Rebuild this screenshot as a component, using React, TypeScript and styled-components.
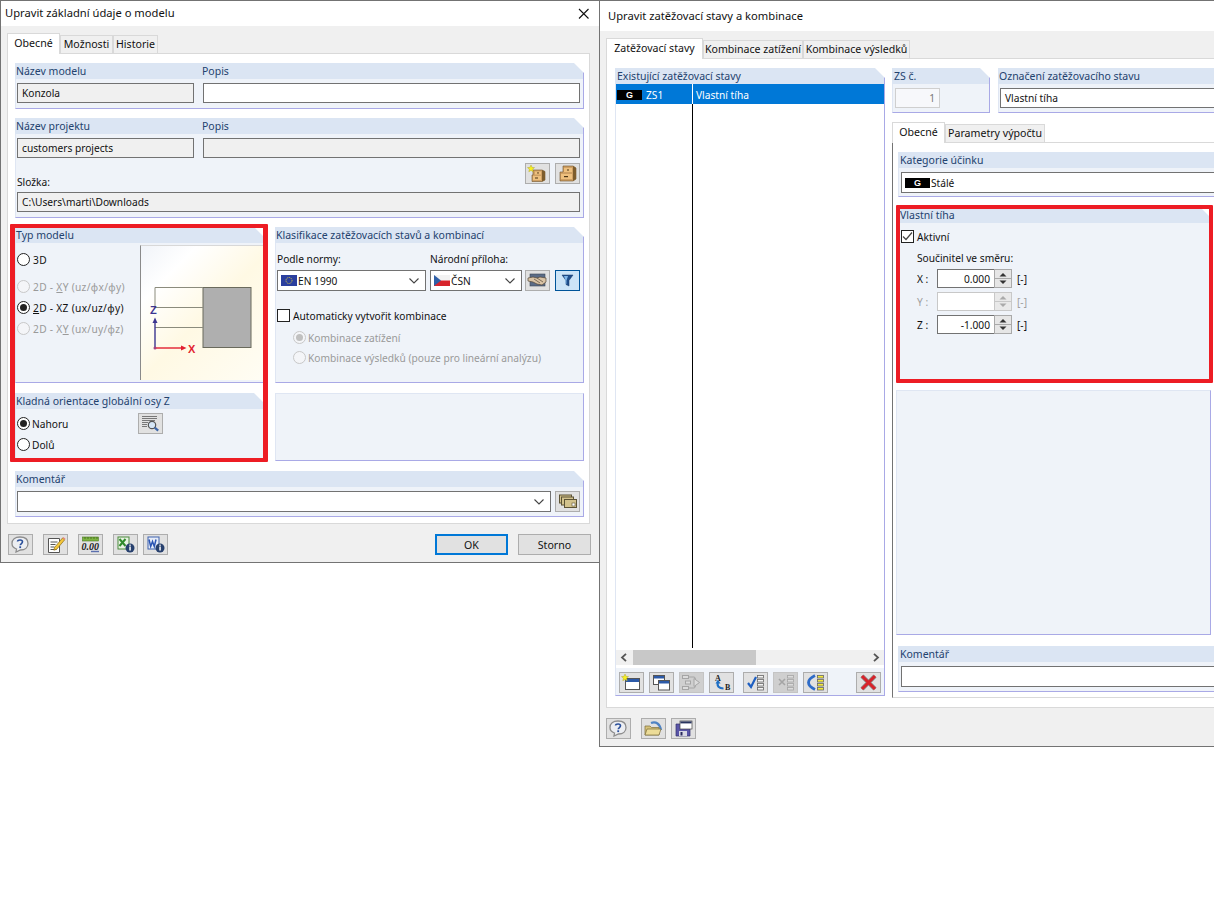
import React from 'react';
import styled, { createGlobalStyle } from 'styled-components';

const GlobalStyle = createGlobalStyle`
  html, body {
    margin: 0;
    background: #fff;
  }
  * {
    box-sizing: border-box;
  }
`;

const Page = styled.div`
  position: relative;
  width: 1214px;
  height: 900px;
  overflow: hidden;
  background: #fff;
  color: #111;
  font-family: 'Noto Sans', 'Liberation Sans', sans-serif;
  font-size: 10.2px;
`;

const Window = styled.div<{ $left: number; $width: number; $height: number }>`
  position: absolute;
  top: 0;
  left: ${(p) => p.$left}px;
  width: ${(p) => p.$width}px;
  height: ${(p) => p.$height}px;
  display: flex;
  flex-direction: column;
  background: #f0f0f0;
  border: 1px solid #737373;
`;

const TitleBar = styled.div<{ $h: number; $pad: number }>`
  flex: none;
  display: flex;
  align-items: center;
  justify-content: space-between;
  height: ${(p) => p.$h}px;
  padding: 0 9px 2px ${(p) => p.$pad}px;
  background: #fff;
  font-size: 11.2px;
  svg {
    margin-top: 2px;
  }
`;

const TabRow = styled.div`
  display: flex;
  align-items: flex-end;
`;

const Tab = styled.div<{ $active?: boolean; $w: number }>`
  width: ${(p) => p.$w}px;
  height: ${(p) => (p.$active ? 21 : 19)}px;
  margin-bottom: -1px;
  padding-bottom: ${(p) => (p.$active ? 2 : 1)}px;
  position: relative;
  z-index: ${(p) => (p.$active ? 1 : 0)};
  display: flex;
  align-items: center;
  justify-content: center;
  background: ${(p) => (p.$active ? '#fff' : '#f0f0f0')};
  border: 1px solid #d9d9d9;
  border-bottom: ${(p) => (p.$active ? 'none' : '1px solid #d9d9d9')};
  font-size: 10.6px;
  white-space: nowrap;
`;

const LeftBody = styled.div`
  flex: 1;
  padding: 7px 9px 0 6px;
  display: flex;
  flex-direction: column;
`;

const LeftPanel = styled.div`
  height: 471px;
  display: flex;
  flex-direction: column;
  gap: 9px;
  padding: 9px 5px 0 7px;
  background: #fff;
  border: 1px solid #d9d9d9;
`;

const Section = styled.section<{ $h: number; $w?: number }>`
  flex: none;
  display: flex;
  flex-direction: column;
  height: ${(p) => p.$h}px;
  width: ${(p) => (p.$w ? `${p.$w}px` : 'auto')};
`;

const SectionHead = styled.div<{ $split?: boolean; $pad?: number }>`
  flex: none;
  height: 16px;
  padding: 0 0 1px ${(p) => p.$pad ?? 1}px;
  display: grid;
  grid-template-columns: ${(p) => (p.$split ? '186px 1fr' : '1fr')};
  align-items: center;
  color: #23426e;
  font-size: 10.5px;
  white-space: nowrap;
  background: linear-gradient(to left, #a9a9e6 1px, #dbe5f3 1px);
  clip-path: polygon(0 0, calc(100% - 10px) 0, 100% 10px, 100% 100%, 0 100%);
`;

const SectionBody = styled.div`
  flex: 1;
  min-height: 0;
  background: #eff3f9;
  border-left: 1px solid #dfe6f3;
  border-right: 1px solid #a9a9e6;
  border-bottom: 1px solid #a9a9e6;
`;

const FieldBody = styled(SectionBody)`
  padding: 4px 3px 0 1px;
`;

const FieldGrid = styled.div`
  display: grid;
  grid-template-columns: 177px 1fr;
  gap: 9px;
`;

const Field = styled.div<{ $tone?: 'white' | 'grey' | 'off'; $h?: number; $w?: number }>`
  flex: ${(p) => (p.$w ? 'none' : '1')};
  width: ${(p) => (p.$w ? `${p.$w}px` : 'auto')};
  height: ${(p) => p.$h ?? 20}px;
  display: flex;
  align-items: center;
  gap: 2px;
  padding: 0 4px;
  white-space: nowrap;
  border: 1px solid ${(p) => (p.$tone === 'off' ? '#cfcfcf' : '#727272')};
  color: ${(p) => (p.$tone === 'off' ? '#777' : '#111')};
  justify-content: ${(p) => (p.$tone === 'off' ? 'flex-end' : 'flex-start')};
  background: ${(p) => (p.$tone === 'grey' ? '#f0f0f0' : p.$tone === 'off' ? '#f7f8fb' : '#fff')};
`;

const NumberField = styled(Field)`
  margin-left: 1px;
`;

const Chevron = styled.svg`
  margin-left: auto;
  margin-right: 2px;
  flex: none;
`;

const Flag = styled.svg`
  flex: none;
  margin: 0 -1px;
`;

const FolderRow = styled.div`
  height: 34px;
  display: flex;
  justify-content: space-between;
  align-items: flex-start;
`;

const FolderLabel = styled.span`
  align-self: flex-end;
  margin-bottom: 3px;
`;

const ButtonRow = styled.div<{ $gap?: number; $top?: number }>`
  display: flex;
  gap: ${(p) => p.$gap ?? 5}px;
  margin-top: ${(p) => p.$top ?? 0}px;
`;

const IconButton = styled.div<{ $off?: boolean; $on?: boolean }>`
  flex: none;
  width: 25px;
  height: 21px;
  display: flex;
  align-items: center;
  justify-content: center;
  background: ${(p) => (p.$on ? '#cce4f7' : p.$off ? '#cfcfcf' : '#e1e1e1')};
  border: 1px solid ${(p) => (p.$on ? '#005499' : p.$off ? '#c4c4c4' : '#adadad')};
`;

const MiddleGrid = styled.div`
  display: grid;
  grid-template-columns: 249px 1fr;
  column-gap: 11px;
  row-gap: 10px;
`;

const TypeBody = styled(SectionBody)`
  display: flex;
  padding-left: 1px;
`;

const RadioColumn = styled.div`
  flex: none;
  width: 123px;
  padding-top: 6px;
  display: flex;
  flex-direction: column;
`;

const ModelLabel = styled.span`
  margin-left: 1px;
  letter-spacing: 0.3px;
`;

const OptionRow = styled.label<{ $off?: boolean; $gapTop?: number; $indent?: number }>`
  height: 21px;
  margin-top: ${(p) => p.$gapTop ?? 0}px;
  margin-left: ${(p) => p.$indent ?? 0}px;
  display: flex;
  align-items: center;
  gap: 2px;
  white-space: nowrap;
  color: ${(p) => (p.$off ? '#9a9a9a' : '#111')};
`;

const Radio = styled.span<{ $checked?: boolean; $off?: boolean }>`
  flex: none;
  width: 13px;
  height: 13px;
  border-radius: 50%;
  display: flex;
  align-items: center;
  justify-content: center;
  background: ${(p) => (p.$off ? '#f4f5f8' : '#fff')};
  border: 1px solid ${(p) => (p.$off ? '#c8c8c8' : '#222')};
  &::after {
    content: '';
    display: ${(p) => (p.$checked ? 'block' : 'none')};
    width: 7px;
    height: 7px;
    border-radius: 50%;
    background: ${(p) => (p.$off ? '#c0c0c0' : '#222')};
  }
`;

const Check = styled.span`
  flex: none;
  width: 13px;
  height: 13px;
  margin-right: 1px;
  display: flex;
  align-items: center;
  justify-content: center;
  background: #fff;
  border: 1px solid #222;
`;

const Diagram = styled.div`
  flex: none;
  width: 123px;
  height: 135px;
  margin-top: 2px;
  background: linear-gradient(135deg, #f1f4f9 0%, #fff 22%, #fff9e4 52%, #fffdf4 100%);
  border-left: 1px solid #8a8a8a;
  border-top: 1px solid #d8d8d8;
`;

const OrientBody = styled(SectionBody)`
  display: flex;
  padding: 4px 0 0 1px;
`;

const OrientColumn = styled.div`
  width: 121px;
`;

const PlainBody = styled(SectionBody)`
  border-top: 1px solid #dfe6f3;
`;

const ClassBody = styled(SectionBody)`
  padding: 9px 3px 0 1px;
`;

const LabelGrid = styled.div`
  display: grid;
  grid-template-columns: 153px 1fr;
  height: 14px;
  line-height: 14px;
  margin-bottom: 4px;
`;

const NormRow = styled.div`
  display: flex;
  align-items: center;
  gap: 4px;
`;

const ExtraButtons = styled.div`
  display: flex;
  gap: 5px;
  margin-left: -1px;
`;

const CommentRow = styled.div`
  display: flex;
  gap: 4px;
`;

const DialogFooter = styled.div`
  flex: 1;
  display: flex;
  align-items: flex-start;
  margin-right: -1px;
  padding: 10px 0 0 1px;
`;

const TextButton = styled.div<{ $primary?: boolean }>`
  width: 73px;
  height: 21px;
  display: flex;
  align-items: center;
  justify-content: center;
  background: #e1e1e1;
  font-size: 10.6px;
  border: ${(p) => (p.$primary ? '2px solid #0078d7' : '1px solid #adadad')};
`;

const FooterRight = styled.div`
  margin-left: auto;
  display: flex;
  gap: 10px;
`;

const FooterIcons = styled.div`
  display: flex;
  gap: 10px;
`;

const RightBody = styled.div`
  flex: 1;
  padding: 7px 0 0 6px;
  display: flex;
  flex-direction: column;
`;

const RightPanel = styled.div`
  height: 650px;
  padding: 9px 0 0 8px;
  display: flex;
  gap: 7px;
  background: #fff;
  border: 1px solid #d9d9d9;
`;

const CaseListWrap = styled.div`
  height: 100%;
  display: flex;
  flex-direction: column;
`;

const CaseList = styled.div`
  flex: 1;
  min-height: 0;
  display: flex;
  background: #fff;
`;

const CaseColumn = styled.div<{ $w?: number; $rule?: boolean }>`
  flex: ${(p) => (p.$w ? 'none' : '1')};
  width: ${(p) => (p.$w ? `${p.$w}px` : 'auto')};
  margin-bottom: 2px;
  border-right: ${(p) => (p.$rule ? '1px solid #000' : 'none')};
`;

const CaseCell = styled.div<{ $rule?: boolean }>`
  height: 20px;
  margin-right: ${(p) => (p.$rule ? -1 : 0)}px;
  display: flex;
  align-items: center;
  gap: 4px;
  padding: 1px 0 0 ${(p) => (p.$rule ? 1 : 3)}px;
  color: #fff;
  background: #0078d7;
  border-right: ${(p) => (p.$rule ? '1px solid #fff' : 'none')};
`;

const Chip = styled.span`
  flex: none;
  width: 25px;
  height: 10px;
  display: flex;
  align-items: center;
  justify-content: center;
  color: #fff;
  background: #000;
  font-family: 'Liberation Sans', sans-serif;
  font-size: 9px;
  font-weight: 700;
`;

const FieldChip = styled(Chip)`
  margin-left: -1px;
  margin-right: -1px;
`;

const HScroll = styled.div`
  flex: none;
  height: 15px;
  display: flex;
  align-items: center;
  justify-content: space-between;
  padding: 0 4px;
  position: relative;
  background: #f0f0f0;
`;

const HThumb = styled.div`
  position: absolute;
  left: 17px;
  top: 0;
  width: 123px;
  height: 15px;
  background: #c8c8c8;
`;

const ListToolbar = styled.div`
  flex: none;
  height: 30px;
  display: flex;
  gap: 9px;
  padding: 7px 3px 0 3px;
  background: linear-gradient(to bottom, #fff 3px, #eff3f9 3px);
`;

const PushRight = styled.div`
  margin-left: auto;
`;

const RightColumn = styled.div`
  flex: 1;
  display: flex;
  flex-direction: column;
`;

const TopRow = styled.div`
  display: flex;
  gap: 8px;
  margin-bottom: 9px;
`;

const NameBody = styled(FieldBody)`
  padding-left: 1px;
  display: flex;
`;

const CategoryBody = styled(FieldBody)`
  padding-left: 2px;
  display: flex;
`;

const SubPanel = styled.div`
  flex: none;
  width: 340px;
  height: 556px;
  padding: 9px 0 0 5px;
  display: flex;
  flex-direction: column;
  background: #fff;
  border-top: 1px solid #d9d9d9;
  border-bottom: 1px solid #d9d9d9;
  border-left: 1px solid #737373;
`;

const WeightHolder = styled.div`
  margin-top: 10px;
  margin-bottom: 10px;
`;

const WeightBody = styled(SectionBody)`
  padding: 3px 0 0 2px;
`;

const CoefRow = styled.div<{ $off?: boolean }>`
  height: 19px;
  margin: 0 0 4px 16px;
  display: flex;
  align-items: center;
  color: ${(p) => (p.$off ? '#a0a0a0' : '#111')};
`;

const CoefName = styled.span`
  width: 20px;
`;

const Coef = styled.div<{ $off?: boolean }>`
  width: 57px;
  height: 19px;
  padding-right: 4px;
  display: flex;
  align-items: center;
  justify-content: flex-end;
  background: #fff;
  color: #111;
  border: 1px solid ${(p) => (p.$off ? '#c8c8c8' : '#727272')};
  border-right: none;
`;

const Spin = styled.svg`
  flex: none;
`;

const Unit = styled.span`
  margin-left: 5px;
`;

const CoefTitle = styled.div`
  height: 14px;
  line-height: 14px;
  margin: 4px 0 4px 16px;
`;

const EmptyBlock = styled(SectionBody)`
  flex: none;
  width: 315px;
  height: 245px;
  margin: 0 0 11px -2px;
  border-top: 1px solid #dfe6f3;
`;

const RightFooter = styled.div`
  flex: 1;
  display: flex;
  gap: 5px;
  padding: 10px 0 0 0;
`;

const FooterHelp = styled.div`
  margin-right: 5px;
`;

const Highlight = styled.div<{ $left: number; $top: number; $w: number; $h: number; $side: number }>`
  position: absolute;
  left: ${(p) => p.$left}px;
  top: ${(p) => p.$top}px;
  width: ${(p) => p.$w}px;
  height: ${(p) => p.$h}px;
  border: 4px solid #ed1c24;
  border-left-width: ${(p) => p.$side}px;
  border-right-width: ${(p) => p.$side}px;
  border-radius: 1px;
  pointer-events: none;
`;

// all toolbar icons share the same 21x17 drawing box
const Ico: React.FC<{ children: React.ReactNode }> = ({ children }) => (
  <svg width="21" height="17" viewBox="0 0 21 17">
    {children}
  </svg>
);

const Star = () => <path d="M4 0l1 2.400 2.500.2-1.900 1.600.6 2.500L4 5.400 1.800 6.700l.6-2.500L.5 2.600 3 2.400z" fill="#f6f01e" stroke="#b5a92a" strokeWidth=".5" />;

const InfoDot = () => (
  <g>
    <circle cx="15" cy="12" r="4.500" fill="#27406e" />
    <rect x="14.300" y="10.500" width="1.500" height="4" fill="#fff" />
    <rect x="14.300" y="8.600" width="1.500" height="1.200" fill="#fff" />
  </g>
);

const HelpIcon = () => (
  <Ico>
    <path d="M10 1c5 0 8 2.500 8 6.500S15 14 10.500 14L6 16l.5-3C3.500 12 2 10 2 7.500 2 3.500 5 1 10 1z" fill="#eceef2" stroke="#8d8d8d" strokeWidth="1.300" />
    <path d="M7.500 5.500c.3-2 5-2.300 5 .3 0 1.700-2.200 1.700-2.300 3.500" fill="none" stroke="#2a4f9a" strokeWidth="1.600" />
    <rect x="9.300" y="10.300" width="1.800" height="1.800" fill="#2a4f9a" />
  </Ico>
);

const NoteIcon = () => (
  <Ico>
    <path d="M3.500 2.500h11v14h-11z" fill="#fff" stroke="#555" />
    <path d="M5.500 6h7M5.500 8.500h5M5.500 11h4M5.500 13.500h6" stroke="#555" />
    <path d="M9.500 11.500L17.500 2l2.200 1.800-8 9.500-2.800.9z" fill="#f4c63a" stroke="#8a6a14" strokeWidth=".7" />
    <path d="M17.500 2l2.200 1.800 .8-1-2.200-1.800z" fill="#e8837a" />
  </Ico>
);

const DecimalIcon = () => (
  <Ico>
    <rect x="2.500" y="1" width="16" height="4" fill="#7cb342" stroke="#4d7a24" strokeWidth=".6" />
    <path d="M5 1v2M8 1v2M11 1v2M14 1v2M17 1v2" stroke="#2f5212" strokeWidth=".6" />
    <text x="1.500" y="14" fontFamily="Liberation Serif, serif" fontStyle="italic" fontWeight="700" fontSize="10" fill="#222">0.00</text>
    <path d="M11 15.500h8" stroke="#5b6fae" strokeWidth="1.400" />
  </Ico>
);

const ExcelInfoIcon = () => (
  <Ico>
    <rect x="3" y="1" width="11" height="12" fill="#e8f3e2" stroke="#4b8a3c" />
    <path d="M4.500 3l6 7M10.500 3l-6 7" stroke="#2f8a2c" strokeWidth="2" />
    <InfoDot />
  </Ico>
);

const WordInfoIcon = () => (
  <Ico>
    <rect x="3" y="1" width="11" height="12" fill="#e6ecf8" stroke="#3f62ad" />
    <path d="M4 3.500l1.700 7 1.800-5 1.800 5 1.700-7" fill="none" stroke="#2b55b3" strokeWidth="1.500" />
    <InfoDot />
  </Ico>
);

const NewDrawerIcon = () => (
  <Ico>
    <path d="M6 5h9l3 1.500V15l-3 1.500H5V10h1z" fill="#cfa064" stroke="#6e5128" strokeWidth=".6" />
    <path d="M15 5l3 1.500V15l-3 1.500z" fill="#7d5c2c" />
    <rect x="8" y="6.500" width="6" height="3" fill="#eec07e" />
    <rect x="10" y="7.500" width="2" height=".9" fill="#4a3414" />
    <rect x="6" y="11" width="8" height="4" fill="#eec07e" />
    <rect x="8" y="12.500" width="3" height="1" fill="#4a3414" />
    <Star />
  </Ico>
);

const DrawerIcon = () => (
  <Ico>
    <path d="M6 1h10l3 2v11l-3 2H3V7h3z" fill="#cfa064" stroke="#6e5128" strokeWidth=".6" />
    <path d="M16 1l3 2v11l-3 2z" fill="#7d5c2c" />
    <rect x="7" y="3" width="8" height="4" fill="#eec07e" />
    <rect x="10" y="4.500" width="2" height="1" fill="#4a3414" />
    <rect x="4" y="9" width="11" height="5" fill="#eec07e" />
    <rect x="7" y="11" width="4" height="1.200" fill="#4a3414" />
  </Ico>
);

const HandsIcon = () => (
  <Ico>
    <rect x="3" y="2" width="15" height="12" fill="#5a6b86" stroke="#3d4656" strokeWidth=".6" />
    <path d="M1 6l5-1 4 1 3-1 6 1v4l-4 3-5-1-4-2-5-1z" fill="#d9c3a5" stroke="#54483a" strokeWidth=".7" />
    <path d="M7 7l3 2 3 2M10 6l3 2 3 2" stroke="#54483a" strokeWidth=".7" fill="none" />
  </Ico>
);

const FunnelIcon = () => (
  <Ico>
    <path d="M5 3h11l-4 5.500V14l-3-1.500V8.500z" fill="#1f4e8c" stroke="#173a68" strokeWidth=".5" />
    <path d="M7 4h4l-1.500 4.500V12l-1-.5V8.500z" fill="#7fb6e8" />
  </Ico>
);

const LookIcon = () => (
  <Ico>
    <path d="M2 1.500h15M2 3.500h15M2 5.500h13M2 7.500h6M2 9.500h5M2 11.500h5" stroke="#777" />
    <circle cx="12" cy="10" r="3.700" fill="#d5e6f7" stroke="#555" strokeWidth="1.200" />
    <path d="M14.700 12.700l3.500 3" stroke="#3d66a8" strokeWidth="2.200" />
  </Ico>
);

const StackIcon = () => (
  <Ico>
    <rect x="2.500" y="2" width="12" height="8" fill="#d2c28c" stroke="#5c5335" />
    <rect x="4.500" y="4" width="12" height="8" fill="#d2c28c" stroke="#5c5335" />
    <rect x="7.500" y="6.500" width="12" height="8" fill="#d2c28c" stroke="#5c5335" />
    <rect x="15" y="10" width="3" height="3" fill="#fff" stroke="#5c5335" strokeWidth=".6" />
  </Ico>
);

const NewWindowIcon = () => (
  <Ico>
    <rect x="4.500" y="4.500" width="14" height="11" fill="#fff" stroke="#555" />
    <rect x="5" y="5" width="13" height="3" fill="#2c5aa8" />
    <Star />
  </Ico>
);

const CopyWindowsIcon = () => (
  <Ico>
    <rect x="2.500" y="1.500" width="11" height="9" fill="#fff" stroke="#555" />
    <rect x="3" y="2" width="10" height="2.500" fill="#2c5aa8" />
    <rect x="7.500" y="6.500" width="11" height="9.500" fill="#fff" stroke="#555" />
    <rect x="8" y="7" width="10" height="2.500" fill="#2c5aa8" />
  </Ico>
);

const FlowIcon = () => (
  <Ico>
    <g fill="#dcdcdc" stroke="#a5a5a5">
      <rect x="1.500" y="1.500" width="6" height="3" />
      <rect x="1.500" y="12.500" width="6" height="3" />
      <rect x="4.500" y="7" width="5" height="3" />
      <path d="M13 4.500l5.500 4-5.500 4z" />
    </g>
    <path d="M7.500 3h6l1 2M7.500 14h6l1-2" stroke="#a5a5a5" fill="none" />
  </Ico>
);

const SwapIcon = () => (
  <Ico>
    <text x="4" y="7" fontFamily="Liberation Serif, serif" fontWeight="700" fontSize="8" fill="#222">A</text>
    <text x="14" y="16" fontFamily="Liberation Serif, serif" fontWeight="700" fontSize="8" fill="#222">B</text>
    <path d="M7 8c-1.500 4 1 6.500 5.500 6.500" fill="none" stroke="#1f6fc4" strokeWidth="2" />
    <path d="M4.500 9.500L7 5.500 9.500 9.500z" fill="#1f6fc4" />
  </Ico>
);

const ListLines = ({ color, fill }: { color: string; fill: string }) => (
  <g fill={fill} stroke={color} strokeWidth=".8">
    <rect x="12.500" y="1.500" width="6" height="2.500" />
    <rect x="12.500" y="5.500" width="6" height="2.500" />
    <rect x="12.500" y="9.500" width="6" height="2.500" />
    <rect x="12.500" y="13.500" width="6" height="2.500" />
  </g>
);

const CheckListIcon = () => (
  <Ico>
    <ListLines color="#666" fill="#f4f4f4" />
    <path d="M3 9l3 4 5-10" fill="none" stroke="#1e5fc2" strokeWidth="2.200" />
  </Ico>
);

const CrossListIcon = () => (
  <Ico>
    <ListLines color="#a5a5a5" fill="#dcdcdc" />
    <path d="M4 5l6 6M10 5l-6 6" stroke="#a5a5a5" strokeWidth="1.600" />
  </Ico>
);

const YellowListIcon = () => (
  <Ico>
    <ListLines color="#666" fill="#f5ea3a" />
    <path d="M10 1.500C5 4 3.500 7 3.500 8.500S5 13 10 15.500" fill="none" stroke="#2f6cc8" strokeWidth="2.800" />
  </Ico>
);

const RedCrossIcon = () => (
  <Ico>
    <path d="M4 2l13 13M17 2L4 15" stroke="#8f8f8f" strokeWidth="4.500" />
    <path d="M4 2l13 13M17 2L4 15" stroke="#d8232a" strokeWidth="3" />
  </Ico>
);

const FolderIcon = () => (
  <Ico>
    <path d="M8 3c5-2 9 1 10 7" fill="none" stroke="#4f83c4" strokeWidth="2.200" />
    <path d="M2 6h5l1.500 1.500H16V15H2z" fill="#d6c27a" stroke="#7c6d3a" strokeWidth=".7" />
    <path d="M2 15l2-6h14l-2 6z" fill="#ecdc98" stroke="#7c6d3a" strokeWidth=".7" />
  </Ico>
);

const SaveIcon = () => (
  <Ico>
    <path d="M3 4h12.500L17 5.500V16H3z" fill="#5a55a8" stroke="#35326e" strokeWidth=".7" />
    <rect x="7" y="1" width="12" height="8" fill="#fff" stroke="#444" strokeWidth=".7" />
    <rect x="7.400" y="1.400" width="11.200" height="2" fill="#28345e" />
    <rect x="6" y="11" width="8" height="5" fill="#d8d8e4" />
    <rect x="7.500" y="12" width="2" height="3.500" fill="#28285e" />
  </Ico>
);

const CloseIcon = () => (
  <svg width="13" height="13" viewBox="0 0 13 13">
    <path d="M2 2l9.500 9.500M11.500 2L2 11.500" stroke="#111" strokeWidth="1.100" />
  </svg>
);

const ChevronDown = () => (
  <Chevron width="10" height="6" viewBox="0 0 10 6">
    <path d="M.5.500L5 5 9.500.500" fill="none" stroke="#444" strokeWidth="1.100" />
  </Chevron>
);

const EuFlag = () => (
  <Flag width="16" height="11" viewBox="0 0 16 11">
    <rect width="16" height="11" fill="#2b3f9e" />
    <circle cx="8" cy="5.500" r="3" fill="none" stroke="#e8d53a" strokeWidth="1" strokeDasharray="1 1" />
  </Flag>
);

const CzFlag = () => (
  <Flag width="16" height="11" viewBox="0 0 16 11">
    <rect width="16" height="5.500" fill="#f2f2f2" />
    <rect y="5.500" width="16" height="5.500" fill="#d7242c" />
    <path d="M0 0l7 5.500L0 11z" fill="#2f5fa6" />
  </Flag>
);

const Tick = () => (
  <svg width="11" height="11" viewBox="0 0 11 11">
    <path d="M1 5.500l3 3L10 1.500" fill="none" stroke="#444" strokeWidth="1.200" />
  </svg>
);

const Spinner = ({ off }: { off?: boolean }) => (
  <Spin width="18" height="19" viewBox="0 0 18 19">
    <rect x=".5" y=".5" width="17" height="18" fill={off ? '#e9e9e9' : '#e6e6e6'} stroke={off ? '#c8c8c8' : '#a9a9a9'} />
    <path d="M1 9.500h16" stroke={off ? '#c8c8c8' : '#a9a9a9'} />
    <path d="M5.500 7.500L9 4l3.500 3.500z" fill={off ? '#aaa' : '#333'} />
    <path d="M5.500 11.500L9 15l3.500-3.500z" fill={off ? '#aaa' : '#333'} />
  </Spin>
);

const ScrollArrow = ({ flip }: { flip?: boolean }) => (
  <svg width="8" height="9" viewBox="0 0 8 9">
    <path d={flip ? 'M2 .8l4 3.700-4 3.700' : 'M6 .8L2 4.500l4 3.700'} fill="none" stroke="#555" strokeWidth="1.800" />
  </svg>
);

const AxisDiagram = () => (
  <svg width="122" height="134" viewBox="0 0 122 134">
    <rect x="62" y="41.500" width="48" height="60" fill="#afafaf" stroke="#6a6a5c" />
    <path d="M14 41.500h48M14 61.500h48M14 81.500h48M14 41.500v20" stroke="#8b8b7c" fill="none" />
    <path d="M14 102V76" stroke="#3c3590" strokeWidth="1.400" />
    <path d="M11.500 77L14 71.500l2.500 5.500z" fill="#3c3590" />
    <text x="9" y="68" fontFamily="Liberation Sans, sans-serif" fontWeight="700" fontSize="11" fill="#3c3590">Z</text>
    <path d="M14 102h28" stroke="#e21f30" strokeWidth="1.400" />
    <path d="M40 99.500l5.500 2.500-5.500 2.500z" fill="#e21f30" />
    <text x="47" y="107" fontFamily="Liberation Sans, sans-serif" fontWeight="700" fontSize="11" fill="#e21f30">X</text>
    <circle cx="14" cy="102" r="1.500" fill="#a2437e" />
  </svg>
);

const App: React.FC = () => {
  return (
    <Page>
      <GlobalStyle />

      <Window $left={0} $width={600} $height={563}>
        <TitleBar $h={25} $pad={4}>
          Upravit základní údaje o modelu
          <CloseIcon />
        </TitleBar>
        <LeftBody>
          <TabRow>
            <Tab $active $w={53}>Obecné</Tab>
            <Tab $w={53}>Možnosti</Tab>
            <Tab $w={45}>Historie</Tab>
          </TabRow>
          <LeftPanel>
            <Section $h={46}>
              <SectionHead $split>
                <span>Název modelu</span>
                <span>Popis</span>
              </SectionHead>
              <FieldBody>
                <FieldGrid>
                  <Field $tone="grey">Konzola</Field>
                  <Field />
                </FieldGrid>
              </FieldBody>
            </Section>

            <Section $h={100}>
              <SectionHead $split>
                <span>Název projektu</span>
                <span>Popis</span>
              </SectionHead>
              <FieldBody>
                <FieldGrid>
                  <Field $tone="grey">customers projects</Field>
                  <Field $tone="grey" />
                </FieldGrid>
                <FolderRow>
                  <FolderLabel>Složka:</FolderLabel>
                  <ButtonRow $top={5}>
                    <IconButton><NewDrawerIcon /></IconButton>
                    <IconButton><DrawerIcon /></IconButton>
                  </ButtonRow>
                </FolderRow>
                <Field $tone="grey">C:\Users\marti\Downloads</Field>
              </FieldBody>
            </Section>

            <MiddleGrid>
              <Section $h={156}>
                <SectionHead>Typ modelu</SectionHead>
                <TypeBody>
                  <RadioColumn>
                    <OptionRow><Radio /><ModelLabel>3D</ModelLabel></OptionRow>
                    <OptionRow $off $gapTop={6}><Radio $off /><ModelLabel>2D - <u>X</u>Y (uz/φx/φy)</ModelLabel></OptionRow>
                    <OptionRow><Radio $checked /><ModelLabel><u>2</u>D - XZ (ux/uz/φy)</ModelLabel></OptionRow>
                    <OptionRow $off><Radio $off /><ModelLabel>2D - X<u>Y</u> (ux/uy/φz)</ModelLabel></OptionRow>
                  </RadioColumn>
                  <Diagram><AxisDiagram /></Diagram>
                </TypeBody>
              </Section>

              <Section $h={156}>
                <SectionHead>Klasifikace zatěžovacích stavů a kombinací</SectionHead>
                <ClassBody>
                  <LabelGrid>
                    <span>Podle normy:</span>
                    <span>Národní příloha:</span>
                  </LabelGrid>
                  <NormRow>
                    <Field $w={149} $h={21}><EuFlag />EN 1990<ChevronDown /></Field>
                    <Field $w={92} $h={21}><CzFlag />ČSN<ChevronDown /></Field>
                    <ExtraButtons>
                      <IconButton><HandsIcon /></IconButton>
                      <IconButton $on><FunnelIcon /></IconButton>
                    </ExtraButtons>
                  </NormRow>
                  <OptionRow $gapTop={14}><Check />Automaticky vytvořit kombinace</OptionRow>
                  <OptionRow $off $indent={16} $gapTop={1}><Radio $off $checked />Kombinace zatížení</OptionRow>
                  <OptionRow $off $indent={16} $gapTop={-1}><Radio $off />Kombinace výsledků (pouze pro lineární analýzu)</OptionRow>
                </ClassBody>
              </Section>

              <Section $h={69}>
                <SectionHead>Kladná orientace globální osy Z</SectionHead>
                <OrientBody>
                  <OrientColumn>
                    <OptionRow><Radio $checked />Nahoru</OptionRow>
                    <OptionRow><Radio />Dolů</OptionRow>
                  </OrientColumn>
                  <IconButton><LookIcon /></IconButton>
                </OrientBody>
              </Section>

              <Section $h={68}>
                <PlainBody />
              </Section>
            </MiddleGrid>

            <Section $h={46}>
              <SectionHead>Komentář</SectionHead>
              <FieldBody>
                <CommentRow>
                  <Field $h={21}><ChevronDown /></Field>
                  <IconButton><StackIcon /></IconButton>
                </CommentRow>
              </FieldBody>
            </Section>
          </LeftPanel>
          <DialogFooter>
            <FooterIcons>
              <IconButton><HelpIcon /></IconButton>
              <IconButton><NoteIcon /></IconButton>
              <IconButton><DecimalIcon /></IconButton>
              <ButtonRow>
                <IconButton><ExcelInfoIcon /></IconButton>
                <IconButton><WordInfoIcon /></IconButton>
              </ButtonRow>
            </FooterIcons>
            <FooterRight>
              <TextButton $primary>OK</TextButton>
              <TextButton>Storno</TextButton>
            </FooterRight>
          </DialogFooter>
        </LeftBody>
      </Window>

      <Window $left={599} $width={720} $height={747}>
        <TitleBar $h={30} $pad={8}>Upravit zatěžovací stavy a kombinace</TitleBar>
        <RightBody>
          <TabRow>
            <Tab $active $w={97}>Zatěžovací stavy</Tab>
            <Tab $w={100}>Kombinace zatížení</Tab>
            <Tab $w={107}>Kombinace výsledků</Tab>
          </TabRow>
          <RightPanel>
            <Section $h={628} $w={270}>
              <SectionHead $pad={2}>Existující zatěžovací stavy</SectionHead>
              <SectionBody>
                <CaseListWrap>
                  <CaseList>
                    <CaseColumn $w={77} $rule>
                      <CaseCell $rule><Chip>G</Chip>ZS1</CaseCell>
                    </CaseColumn>
                    <CaseColumn>
                      <CaseCell>Vlastní tíha</CaseCell>
                    </CaseColumn>
                  </CaseList>
                  <HScroll>
                    <HThumb />
                    <ScrollArrow />
                    <ScrollArrow flip />
                  </HScroll>
                  <ListToolbar>
                    <ButtonRow>
                      <IconButton><NewWindowIcon /></IconButton>
                      <IconButton><CopyWindowsIcon /></IconButton>
                      <IconButton $off><FlowIcon /></IconButton>
                      <IconButton><SwapIcon /></IconButton>
                    </ButtonRow>
                    <ButtonRow>
                      <IconButton><CheckListIcon /></IconButton>
                      <IconButton $off><CrossListIcon /></IconButton>
                      <IconButton><YellowListIcon /></IconButton>
                    </ButtonRow>
                    <PushRight>
                      <IconButton><RedCrossIcon /></IconButton>
                    </PushRight>
                  </ListToolbar>
                </CaseListWrap>
              </SectionBody>
            </Section>

            <RightColumn>
              <TopRow>
                <Section $h={45} $w={98}>
                  <SectionHead $pad={2}>ZS č.</SectionHead>
                  <FieldBody>
                    <NumberField $tone="off" $w={45}>1</NumberField>
                  </FieldBody>
                </Section>
                <Section $h={45} $w={320}>
                  <SectionHead>Označení zatěžovacího stavu</SectionHead>
                  <NameBody>
                    <Field>Vlastní tíha</Field>
                  </NameBody>
                </Section>
              </TopRow>
              <TabRow>
                <Tab $active $w={53}>Obecné</Tab>
                <Tab $w={100}>Parametry výpočtu</Tab>
              </TabRow>
              <SubPanel>
                <Section $h={45} $w={340}>
                  <SectionHead $pad={2}>Kategorie účinku</SectionHead>
                  <CategoryBody>
                    <Field $h={21}><FieldChip>G</FieldChip>Stálé</Field>
                  </CategoryBody>
                </Section>
                <WeightHolder>
                  <Section $h={173} $w={312}>
                    <SectionHead $pad={2}>Vlastní tíha</SectionHead>
                    <WeightBody>
                      <OptionRow><Check><Tick /></Check>Aktivní</OptionRow>
                      <CoefTitle>Součinitel ve směru:</CoefTitle>
                      <CoefRow>
                        <CoefName>X :</CoefName>
                        <Coef>0.000</Coef>
                        <Spinner />
                        <Unit>[-]</Unit>
                      </CoefRow>
                      <CoefRow $off>
                        <CoefName>Y :</CoefName>
                        <Coef $off />
                        <Spinner off />
                        <Unit>[-]</Unit>
                      </CoefRow>
                      <CoefRow>
                        <CoefName>Z :</CoefName>
                        <Coef>-1.000</Coef>
                        <Spinner />
                        <Unit>[-]</Unit>
                      </CoefRow>
                    </WeightBody>
                  </Section>
                </WeightHolder>
                <EmptyBlock />
                <Section $h={46} $w={340}>
                  <SectionHead $pad={2}>Komentář</SectionHead>
                  <CategoryBody>
                    <Field $h={21} />
                  </CategoryBody>
                </Section>
              </SubPanel>
            </RightColumn>
          </RightPanel>
          <RightFooter>
            <FooterHelp>
              <IconButton><HelpIcon /></IconButton>
            </FooterHelp>
            <IconButton><FolderIcon /></IconButton>
            <IconButton><SaveIcon /></IconButton>
          </RightFooter>
        </RightBody>
      </Window>

      <Highlight $left={10} $top={224} $w={258} $h={238} $side={5} />
      <Highlight $left={896} $top={205} $w={317} $h={178} $side={4} />
    </Page>
  );
};

export default App;
